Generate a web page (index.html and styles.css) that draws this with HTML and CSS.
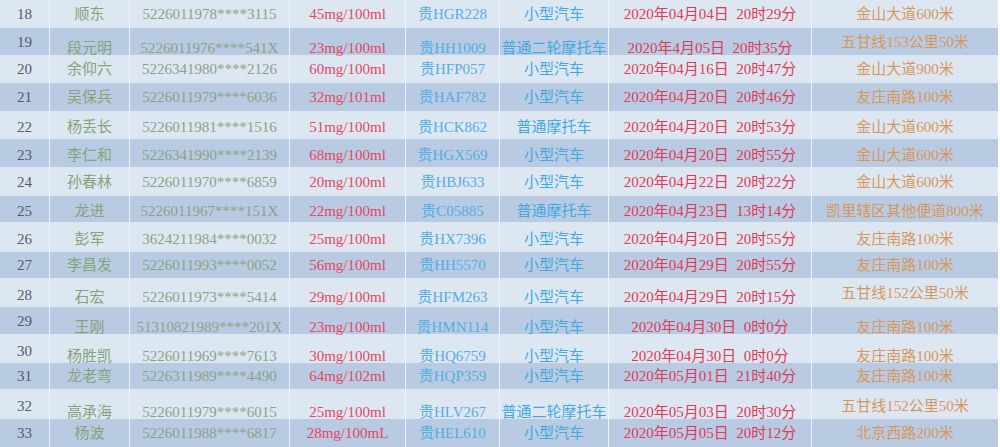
FILE: index.html
```html
<!DOCTYPE html>
<html lang="zh-CN">
<head>
<meta charset="utf-8">
<title>酒驾名单</title>
<link rel="stylesheet" href="styles.css">
</head>
<body>
<div class="sheet">
  <div class="row light h28">
    <div class="c no">18</div><div class="c nm">顺东</div><div class="c id">5226011978****3115</div><div class="c al">45mg/100ml</div><div class="c pl">贵HGR228</div><div class="c ty">小型汽车</div><div class="c dt">2020年04月04日&ensp;20时29分</div><div class="c lc">金山大道600米</div>
  </div>
  <div class="row dark h27">
    <div class="c no">19</div><div class="c nm lo">段元明</div><div class="c id lo">5226011976****541X</div><div class="c al lo">23mg/100ml</div><div class="c pl lo">贵HH1009</div><div class="c ty lo">普通二轮摩托车</div><div class="c dt lo">2020年4月05日&ensp;20时35分</div><div class="c lc">五甘线153公里50米</div>
  </div>
  <div class="row light h28">
    <div class="c no">20</div><div class="c nm">余仰六</div><div class="c id">5226341980****2126</div><div class="c al">60mg/100ml</div><div class="c pl">贵HFP057</div><div class="c ty">小型汽车</div><div class="c dt">2020年04月16日&ensp;20时47分</div><div class="c lc">金山大道900米</div>
  </div>
  <div class="row dark h28">
    <div class="c no">21</div><div class="c nm">吴保兵</div><div class="c id">5226011979****6036</div><div class="c al">32mg/101ml</div><div class="c pl">贵HAF782</div><div class="c ty">小型汽车</div><div class="c dt">2020年04月20日&ensp;20时46分</div><div class="c lc">友庄南路100米</div>
  </div>
  <div class="row light h28 s2">
    <div class="c no">22</div><div class="c nm">杨丢长</div><div class="c id">5226011981****1516</div><div class="c al">51mg/100ml</div><div class="c pl">贵HCK862</div><div class="c ty">普通摩托车</div><div class="c dt">2020年04月20日&ensp;20时53分</div><div class="c lc">金山大道600米</div>
  </div>
  <div class="row dark h28 s2">
    <div class="c no">23</div><div class="c nm">李仁和</div><div class="c id">5226341990****2139</div><div class="c al">68mg/100ml</div><div class="c pl">贵HGX569</div><div class="c ty">小型汽车</div><div class="c dt">2020年04月20日&ensp;20时55分</div><div class="c lc">金山大道600米</div>
  </div>
  <div class="row light h29">
    <div class="c no">24</div><div class="c nm">孙春林</div><div class="c id">5226011970****6859</div><div class="c al">20mg/100ml</div><div class="c pl">贵HBJ633</div><div class="c ty">小型汽车</div><div class="c dt">2020年04月22日&ensp;20时22分</div><div class="c lc">金山大道600米</div>
  </div>
  <div class="row dark h26 s2">
    <div class="c no">25</div><div class="c nm">龙进</div><div class="c id">5226011967****151X</div><div class="c al">22mg/100ml</div><div class="c pl">贵C05885</div><div class="c ty">普通摩托车</div><div class="c dt">2020年04月23日&ensp;13时14分</div><div class="c lc">凯里辖区其他便道800米</div>
  </div>
  <div class="row light h30 s2">
    <div class="c no">26</div><div class="c nm">彭军</div><div class="c id">3624211984****0032</div><div class="c al">25mg/100ml</div><div class="c pl">贵HX7396</div><div class="c ty">小型汽车</div><div class="c dt">2020年04月20日&ensp;20时55分</div><div class="c lc">友庄南路100米</div>
  </div>
  <div class="row dark h26">
    <div class="c no">27</div><div class="c nm">李昌发</div><div class="c id">5226011993****0052</div><div class="c al">56mg/100ml</div><div class="c pl">贵HH5570</div><div class="c ty">小型汽车</div><div class="c dt">2020年04月29日&ensp;20时55分</div><div class="c lc">友庄南路100米</div>
  </div>
  <div class="row light h29 s4">
    <div class="c no m2">28</div><div class="c nm">石宏</div><div class="c id">5226011973****5414</div><div class="c al">29mg/100ml</div><div class="c pl">贵HFM263</div><div class="c ty">小型汽车</div><div class="c dt">2020年04月29日&ensp;20时15分</div><div class="c lc m0">五甘线152公里50米</div>
  </div>
  <div class="row dark h27">
    <div class="c no">29</div><div class="c nm lo">王刚</div><div class="c id lo">51310821989****201X</div><div class="c al lo">23mg/100ml</div><div class="c pl lo">贵HMN114</div><div class="c ty lo">小型汽车</div><div class="c dt lo">2020年04月30日&ensp;0时0分</div><div class="c lc lo">友庄南路100米</div>
  </div>
  <div class="row light h29">
    <div class="c no m2">30</div><div class="c nm lo">杨胜凯</div><div class="c id lo">5226011969****7613</div><div class="c al lo">30mg/100ml</div><div class="c pl lo">贵HQ6759</div><div class="c ty lo">小型汽车</div><div class="c dt lo">2020年04月30日&ensp;0时0分</div><div class="c lc lo">友庄南路100米</div>
  </div>
  <div class="row dark h26">
    <div class="c no">31</div><div class="c nm">龙老弯</div><div class="c id">5226311989****4490</div><div class="c al">64mg/102ml</div><div class="c pl">贵HQP359</div><div class="c ty">小型汽车</div><div class="c dt">2020年05月01日&ensp;21时40分</div><div class="c lc">友庄南路100米</div>
  </div>
  <div class="row light h30">
    <div class="c no m2">32</div><div class="c nm lo">高承海</div><div class="c id lo">5226011979****6015</div><div class="c al lo">25mg/100ml</div><div class="c pl lo">贵HLV267</div><div class="c ty lo">普通二轮摩托车</div><div class="c dt lo">2020年05月03日&ensp;20时30分</div><div class="c lc m2">五甘线152公里50米</div>
  </div>
  <div class="row dark h28">
    <div class="c no">33</div><div class="c nm">杨波</div><div class="c id">5226011988****6817</div><div class="c al">28mg/100mL</div><div class="c pl">贵HEL610</div><div class="c ty">小型汽车</div><div class="c dt">2020年05月05日&ensp;20时12分</div><div class="c lc">北京西路200米</div>
  </div>
</div>
</body>
</html>
```

FILE: styles.css
```css
html, body {
  margin: 0;
  padding: 0;
  background: #ffffff;
}

body {
  font-family: "Liberation Serif", "Noto Sans CJK SC", serif;
  font-size: 15px;
}

.sheet {
  width: 998px;
}

.row {
  display: grid;
  grid-template-columns: 50px 80px 160px 116px 94px 109px 203px 186px;
}

.light { background: #dde7f2; }
.dark { background: #b8cbe3; }

.h26 { height: 26px; }
.h27 { height: 27px; }
.h28 { height: 28px; }
.h29 { height: 29px; }
.h30 { height: 30px; }

.c {
  box-sizing: border-box;
  display: flex;
  align-items: center;
  justify-content: center;
  border-right: 1px solid #eef3f9;
  line-height: 16px;
  white-space: nowrap;
}

.c:last-child { border-right: none; }

.s2 .c { padding-top: 4px; }
.s4 .c { padding-top: 8px; }
.row .c.m0 { padding-top: 0; }
.row .c.m2 { padding-top: 4px; }

.row .c.lo {
  align-items: flex-end;
  line-height: 14px;
  padding-top: 0;
}

.no { color: #4f5b71; }
.nm { color: #86a379; }
.id { color: #8aa386; }
.al { color: #e4475f; }
.pl { color: #55ade2; }
.ty { color: #42a8df; }
.dt { color: #e03a55; }
.lc { color: #d8975a; }
```
